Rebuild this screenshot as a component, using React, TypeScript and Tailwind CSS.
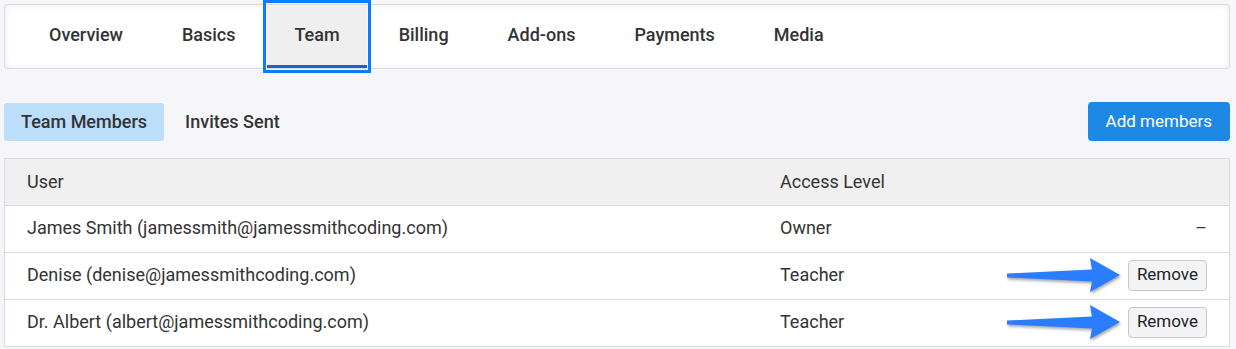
import React from 'react';

const tabs = ['Overview', 'Basics', 'Team', 'Billing', 'Add-ons', 'Payments', 'Media'];

interface Member {
  name: string;
  email: string;
  access: string;
  removable: boolean;
}

const members: Member[] = [
  { name: 'James Smith', email: 'jamessmith@jamessmithcoding.com', access: 'Owner', removable: false },
  { name: 'Denise', email: 'denise@jamessmithcoding.com', access: 'Teacher', removable: true },
  { name: 'Dr. Albert', email: 'albert@jamessmithcoding.com', access: 'Teacher', removable: true },
];

// annotation arrow pointing at the Remove button
const Arrow: React.FC = () => (
  <svg
    width="116"
    height="38"
    viewBox="0 0 116 38"
    className="absolute right-full top-1/2 mr-[6px] -translate-y-1/2 drop-shadow-[1px_2px_1.5px_rgba(0,0,0,0.35)]"
  >
    <path d="M1 16.5 L86 12.5 L84 1 L114 18 L84 35 L86 24.5 L1 20.5 Z" fill="#2a7dff" />
  </svg>
);

export default function App() {
  return (
    <div className="min-h-[349px] w-[1236px] bg-[#f6f6fa] pl-[4px] pt-[4px] pb-[3px] font-['Roboto',_'Liberation_Sans',_sans-serif] text-[#333]">
      <div className="w-[1226px]">
        {/* Tabs */}
        <div className="flex h-[65px] items-stretch rounded-[3px] border border-[#dcdcdc] bg-white pl-[17px] shadow-[inset_0_0_6px_rgba(0,0,0,0.09)]">
          {tabs.map((tab) => {
            const active = tab === 'Team';
            return (
              <div
                key={tab}
                className={`relative mr-[5px] flex items-center px-[27px] text-[18px] font-medium ${
                  active ? 'bg-[#efefef]' : ''
                }`}
              >
                <span className="-mt-[4px]">{tab}</span>
                {active && (
                  <>
                    <div className="absolute bottom-0 left-0 right-0 h-[3px] bg-[#1c64c4]" />
                    <div className="absolute -bottom-[5px] -left-[4px] -right-[4px] -top-[5px] border-[3px] border-[#0a7cff]" />
                  </>
                )}
              </div>
            );
          })}
        </div>

        {/* Sub tabs + action */}
        <div className="mt-[33px] flex items-center justify-between">
          <div className="flex items-center">
            <div className="flex h-[38px] items-center rounded-[3px] bg-[#bbdefb] px-[17px] text-[18px] font-medium">
              Team Members
            </div>
            <div className="ml-[4px] flex h-[38px] items-center px-[17px] text-[18px] font-medium">Invites Sent</div>
          </div>
          <button className="flex h-[39px] items-center rounded-[4px] bg-[#1e88e5] px-[18px] text-[17px] text-white">
            Add members
          </button>
        </div>

        {/* Members table */}
        <div className="mt-[17px] border border-[#dcdcdc] bg-white text-[18px]">
          <div className="flex h-[46px] items-center bg-[#f0f0f0] pb-[2px]">
            <div className="w-[775px] pl-[22px]">User</div>
            <div className="flex-1">Access Level</div>
          </div>
          {members.map((m) => (
            <div key={m.email} className="flex h-[47px] items-center border-t border-[#dcdcdc]">
              <div className="w-[775px] pb-[3px] pl-[22px]">
                {m.name} ({m.email})
              </div>
              <div className="flex-1 pb-[3px]">{m.access}</div>
              <div className="flex items-center justify-end pr-[22px]">
                {m.removable ? (
                  <div className="relative pb-[2px]">
                    <Arrow />
                    <button className="h-[31px] rounded-[4px] border border-[#c9c9c9] bg-[#f4f4f6] px-[8px] text-[17px] text-[#222]">
                      Remove
                    </button>
                  </div>
                ) : (
                  <span className="pb-[3px] text-[#333]">–</span>
                )}
              </div>
            </div>
          ))}
        </div>
      </div>
    </div>
  );
}
